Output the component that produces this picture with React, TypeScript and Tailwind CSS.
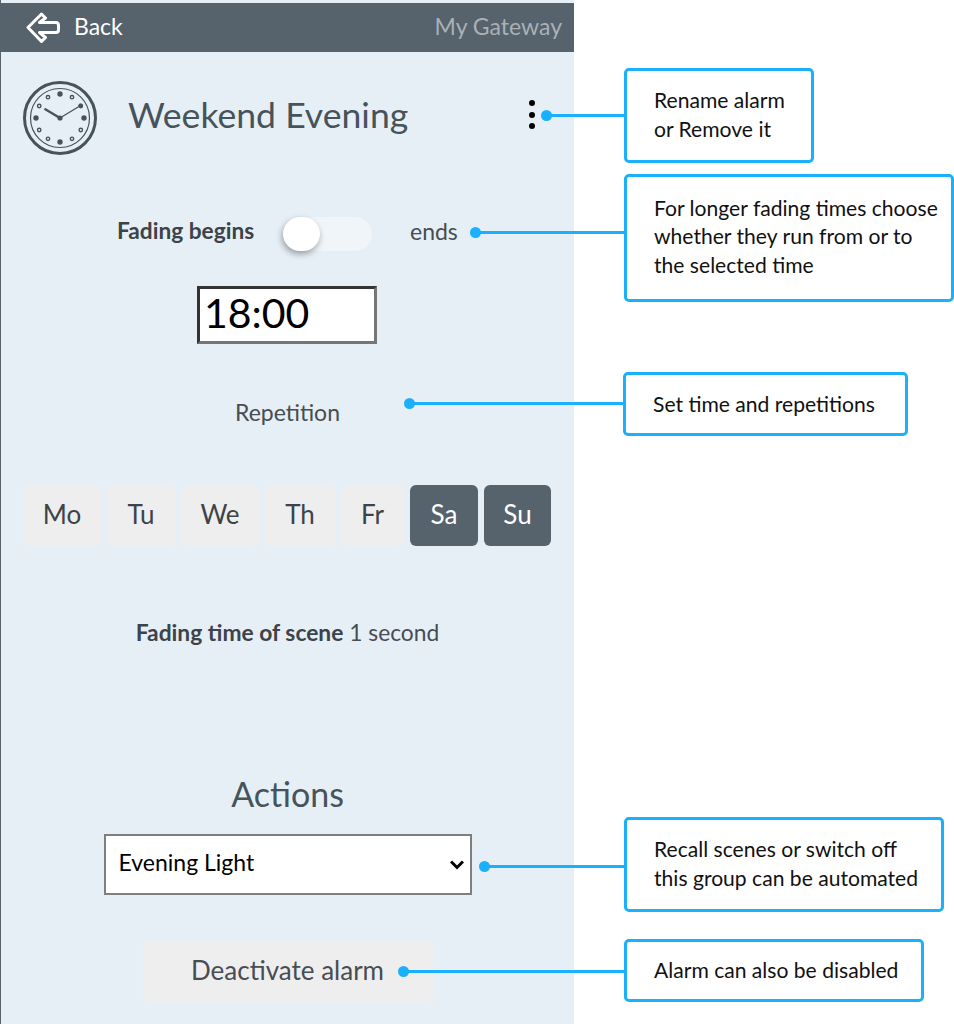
const days = [
  { label: "Mo", width: "w-[78px]" },
  { label: "Tu", width: "w-[68px]" },
  { label: "We", width: "w-[78px]" },
  { label: "Th", width: "w-[70px]" },
  { label: "Fr", width: "w-[63px]" },
  { label: "Sa", width: "w-[68px]", active: true },
  { label: "Su", width: "w-[67px]", active: true },
];

function BackArrow() {
  return (
    <svg width="34" height="32" viewBox="0 0 34 32" fill="none" stroke="white" strokeWidth="3" strokeLinejoin="round">
      <path d="M15.5 2 L2 15.5 L15.5 29.5 L19.5 25.5 L13.5 20.5 L30 20.5 Q32.5 20.5 32.5 18 L32.5 13.5 Q32.5 10.5 30 10.5 L13.5 10.5 L19.5 6 Z" />
    </svg>
  );
}

function ClockIcon() {
  const big = [0, 90, 180, 270];
  const small = [30, 60, 120, 150, 210, 240, 300, 330];
  return (
    <svg width="76" height="76" viewBox="0 0 76 76" fill="none" stroke="#47535b">
      <circle cx="38" cy="38" r="35.5" strokeWidth="3" />
      <circle cx="38" cy="38" r="29.5" strokeWidth="1.2" />
      {big.map((a) => (
        <circle
          key={a}
          cx={38 + 24 * Math.sin((a * Math.PI) / 180)}
          cy={38 - 24 * Math.cos((a * Math.PI) / 180)}
          r="2.7"
          fill="#47535b"
          stroke="none"
        />
      ))}
      {small.map((a) => (
        <circle
          key={a}
          cx={38 + 24 * Math.sin((a * Math.PI) / 180)}
          cy={38 - 24 * Math.cos((a * Math.PI) / 180)}
          r="1.7"
          strokeWidth="1.4"
        />
      ))}
      <path d="M38 38 L23.3 29.3" strokeWidth="2.4" strokeLinecap="round" />
      <path d="M38 38 L59 25.3" strokeWidth="1.3" strokeLinecap="round" />
      <circle cx="38" cy="38" r="2.6" fill="#47535b" stroke="none" />
      <circle cx="58.5" cy="25.6" r="2" fill="#47535b" stroke="none" />
    </svg>
  );
}

function Callout({ className, lines }: { className: string; lines: string[] }) {
  return (
    <div className={`absolute flex flex-col justify-center bg-white border-[3px] border-[#1ab0fb] rounded-[5px] pl-[27px] text-[21.1px] leading-[28.5px] text-[#111] ${className}`}>
      {lines.map((l) => (
        <div key={l} className="whitespace-nowrap">{l}</div>
      ))}
    </div>
  );
}

function Connector({ className }: { className: string }) {
  return (
    <div className={`absolute h-[3px] bg-[#1ab0fb] ${className}`}>
      <div className="absolute -left-[6px] -top-[4px] w-[11px] h-[11px] rounded-full bg-[#1ab0fb]" />
    </div>
  );
}

export default function App() {
  return (
    <div className="relative w-[954px] h-[1024px] bg-white overflow-hidden font-['Lato','Carlito','Liberation_Sans',sans-serif]">
      {/* phone panel */}
      <div className="w-[574px] h-[1024px] pt-[3px] bg-[#e6eff6] flex flex-col border-l border-[#56626c]">
        <header className="h-[49px] shrink-0 bg-[#56626c] flex items-center justify-between pl-[25px] pr-[12px]">
          <div className="flex items-center gap-[14px]">
            <BackArrow />
            <span className="text-white text-[23px] pb-[3px]">Back</span>
          </div>
          <span className="text-[#a9b1b7] text-[23px] pb-[3px]">My Gateway</span>
        </header>

        <div className="mt-[28px] h-[76px] flex items-center pl-[21px] pr-[39px]">
          <ClockIcon />
          <h1 className="ml-[30px] flex-1 text-[35.6px] leading-[44px] pb-[6px] text-[#47535b] font-normal">Weekend Evening</h1>
          <div className="flex flex-col gap-[5.5px] pb-[7px]">
            <span className="w-[6px] h-[6px] rounded-full bg-black" />
            <span className="w-[6px] h-[6px] rounded-full bg-black" />
            <span className="w-[6px] h-[6px] rounded-full bg-black" />
          </div>
        </div>

        <div className="mt-[61px] h-[34px] flex items-center">
          <span className="ml-[116px] w-[166px] text-[22.7px] font-bold pb-[6px] text-[#3c4349]">Fading begins</span>
          <div className="relative w-[89px] h-[34px] rounded-full bg-[#f0f5fa]">
            <div className="absolute left-0 top-0 w-[37px] h-[34px] rounded-full bg-white shadow-[-1px_3px_6px_rgba(0,0,0,0.35)]" />
          </div>
          <span className="ml-[38px] text-[23px] pb-[6px] text-[#474d52]">ends</span>
        </div>

        <div className="mt-[35px] flex justify-center">
          <input
            readOnly
            value="18:00"
            className="-ml-px w-[180px] h-[58px] bg-white pl-[4px] pb-[5px] text-[41px] text-black border-[3px] border-t-[#333] border-l-[#333] border-r-[#767676] border-b-[#767676] outline-none"
          />
        </div>

        <p className="mt-[53px] text-center text-[23px] leading-[30px] text-[#474d52]">Repetition</p>

        <div className="mt-[58px] flex gap-[6px] pl-[22px]">
          {days.map((d) => (
            <button
              key={d.label}
              className={`${d.width} h-[61px] rounded-[6px] pb-[2px] text-[26px] ${d.active ? "bg-[#56626c] text-white" : "bg-[#eeeeee] text-[#3c4349]"}`}
            >
              {d.label}
            </button>
          ))}
        </div>

        <p className="mt-[71px] text-center text-[22.8px] leading-[30px] text-[#474d52]">
          <b className="text-[#3c4349]">Fading time of scene</b> 1 second
        </p>

        <h2 className="mt-[125px] text-center text-[34px] leading-[44px] text-[#47535b] font-normal">Actions</h2>

        <div className="mt-[18px] flex justify-center">
          <div className="relative">
            <select className="block w-[368px] h-[61px] bg-white border-2 border-[#7f7f7f] pl-[13px] pb-[4px] text-[23px] text-black appearance-none">
              <option>Evening Light</option>
            </select>
            <svg className="absolute right-[8px] top-[26px] pointer-events-none" width="14" height="10" viewBox="0 0 14 10" fill="none" stroke="black" strokeWidth="3">
              <path d="M1 1.5 L7 7.5 L13 1.5" />
            </svg>
          </div>
        </div>

        <div className="mt-[46px] flex justify-center">
          <button className="w-[290px] h-[61px] pb-[2px] bg-[#eeeeee] text-[26px] text-[#474d52] rounded-[3px]">Deactivate alarm</button>
        </div>
      </div>

      {/* annotations */}
      <Connector className="left-[547px] top-[114px] w-[77px]" />
      <Connector className="left-[476px] top-[231px] w-[148px]" />
      <Connector className="left-[410px] top-[402px] w-[213px]" />
      <Connector className="left-[485px] top-[865px] w-[139px]" />
      <Connector className="left-[404px] top-[970px] w-[220px]" />

      <Callout className="left-[624px] top-[68px] w-[190px] h-[95px] pb-[2px]" lines={["Rename alarm", "or Remove it"]} />
      <Callout className="left-[624px] top-[174px] w-[330px] h-[128px] pb-[3px]" lines={["For longer fading times choose", "whether they run from or to", "the selected time"]} />
      <Callout className="left-[623px] top-[372px] w-[285px] h-[64px]" lines={["Set time and repetitions"]} />
      <Callout className="left-[624px] top-[817px] w-[320px] h-[95px] pb-[2px]" lines={["Recall scenes or switch off", "this group can be automated"]} />
      <Callout className="left-[624px] top-[939px] w-[300px] h-[63px]" lines={["Alarm can also be disabled"]} />
    </div>
  );
}
